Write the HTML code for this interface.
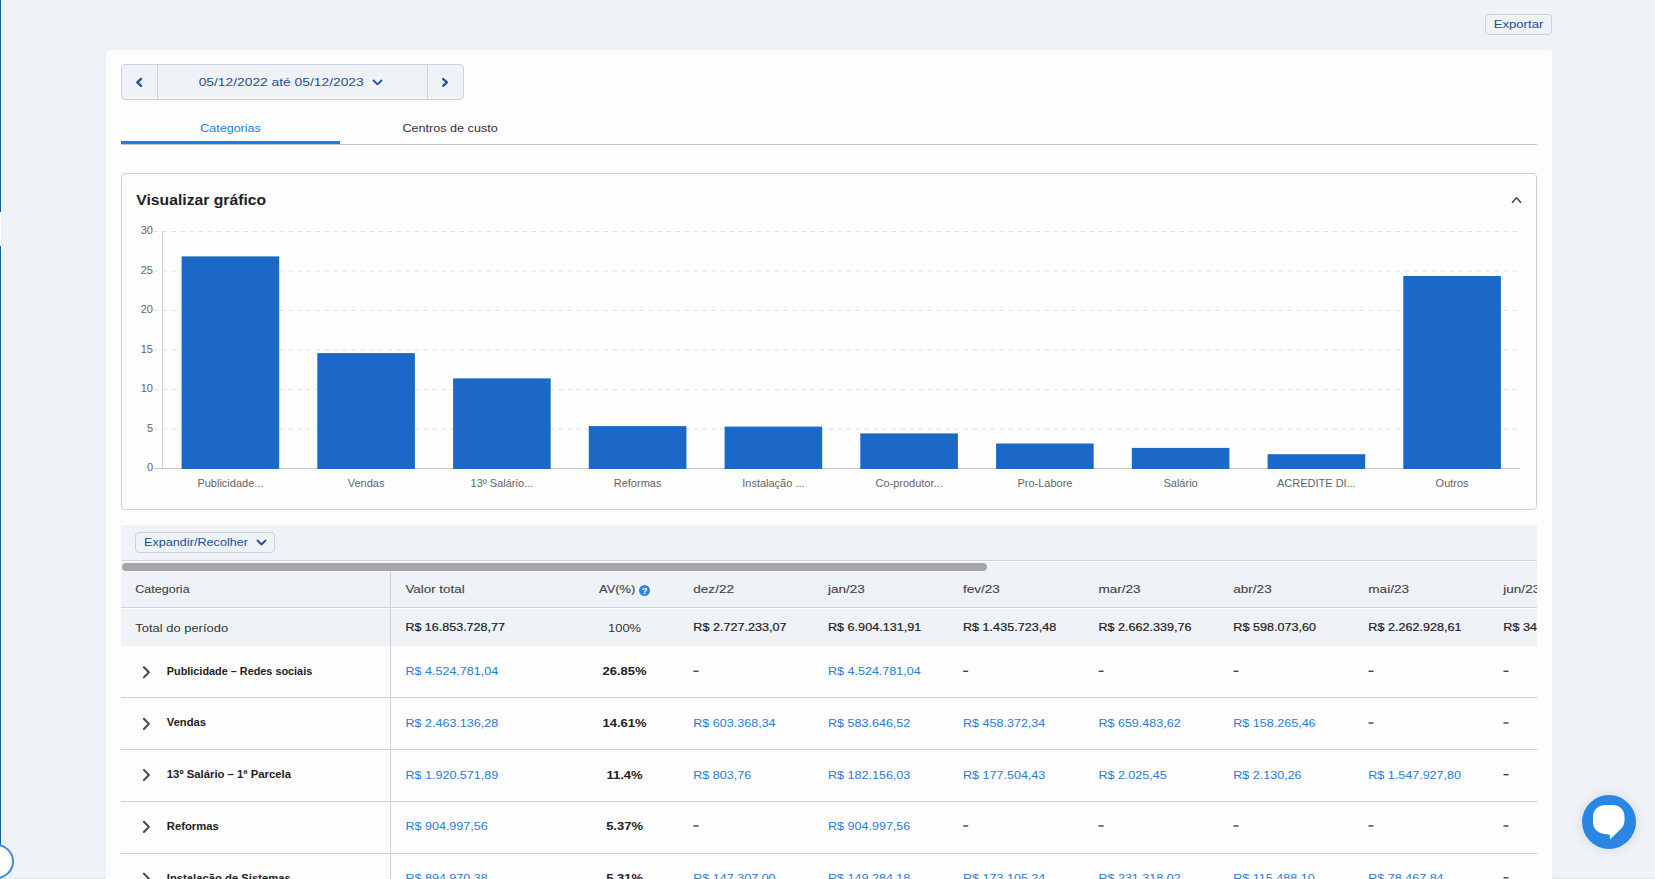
<!DOCTYPE html>
<html><head><meta charset="utf-8"><style>
*{margin:0;padding:0;box-sizing:border-box}
html,body{width:1655px;height:879px;overflow:hidden;background:#eff2f7;font-family:"Liberation Sans",sans-serif;color:#333}
.a{position:absolute}
svg text{font-family:"Liberation Sans",sans-serif}
</style></head><body>
<div class="a" style="left:0;top:0;width:1px;height:212px;background:#1160b0"></div>
<div class="a" style="left:0;top:212px;width:1px;height:34px;background:#ffffff"></div>
<div class="a" style="left:0;top:246px;width:1px;height:600px;background:#1160b0"></div>
<div class="a" style="left:0;top:878px;width:1655px;height:1px;background:#e4e4e6"></div>
<div class="a" style="left:1485px;top:14px;width:67px;height:21px;border:1px solid #c9d3de;border-radius:4px;background:#eff2f7"></div>
<div class="a" style="left:106px;top:50px;width:1446px;height:840px;background:#fdfdfd;border-radius:4px;box-shadow:0 0 2px rgba(0,0,0,.03)"></div>
<div class="a" style="left:121px;top:64px;width:343px;height:36px;border:1px solid #c9d3de;border-radius:4px;background:#eff2f7"></div>
<div class="a" style="left:157px;top:65px;width:1px;height:34px;background:#c9d3de"></div>
<div class="a" style="left:427px;top:65px;width:1px;height:34px;background:#c9d3de"></div>
<div class="a" style="left:121px;top:144px;width:1416px;height:1px;background:#c4c4c4"></div>
<div class="a" style="left:121px;top:141px;width:219px;height:3px;background:#1a7de0"></div>
<div class="a" style="left:121px;top:173px;width:1416px;height:337px;border:1px solid #c9d3de;border-radius:4px;background:#fdfdfd"></div>
<div class="a" style="left:121px;top:525px;width:1416px;height:35px;background:#eff2f7"></div>
<div class="a" style="left:121px;top:560px;width:1416px;height:1px;background:#c9d3de"></div>
<div class="a" style="left:135px;top:532px;width:140px;height:21px;border:1px solid #c9d3de;border-radius:4px;background:#eff2f7"></div>
<div class="a" style="left:121px;top:562px;width:1416px;height:45px;background:#eff2f7"></div>
<div class="a" style="left:121px;top:607px;width:1416px;height:1px;background:#c9d3de"></div>
<div class="a" style="left:122px;top:563px;width:865px;height:8px;border-radius:4px;background:#a5a5a7"></div>
<div class="a" style="left:121px;top:609px;width:1416px;height:37px;background:#eff2f7"></div>
<div class="a" style="left:121px;top:697px;width:1416px;height:1px;background:#c9d3de"></div>
<div class="a" style="left:121px;top:749px;width:1416px;height:1px;background:#c9d3de"></div>
<div class="a" style="left:121px;top:801px;width:1416px;height:1px;background:#c9d3de"></div>
<div class="a" style="left:121px;top:853px;width:1416px;height:1px;background:#c9d3de"></div>
<div class="a" style="left:390px;top:572px;width:1px;height:35px;background:#c9d3de"></div>
<div class="a" style="left:390px;top:609px;width:1px;height:270px;background:#c9d3de"></div>
<div class="a" style="left:1582px;top:795px;width:54px;height:54px;border-radius:50%;background:#2a86e3;box-shadow:0 0 10px 3px rgba(0,0,0,.07)"></div>
<div class="a" style="left:-21px;top:844px;width:35px;height:35px;border-radius:50%;border:2px solid #2f8ce8;background:#fff"></div>
<svg class="a" style="left:0;top:0" width="1655" height="879">
<line x1="153.5" y1="429.0" x2="1520" y2="429.0" stroke="#e0e0e0" stroke-dasharray="4.5 4.5"/>
<line x1="153.5" y1="389.5" x2="1520" y2="389.5" stroke="#e0e0e0" stroke-dasharray="4.5 4.5"/>
<line x1="153.5" y1="350.0" x2="1520" y2="350.0" stroke="#e0e0e0" stroke-dasharray="4.5 4.5"/>
<line x1="153.5" y1="310.5" x2="1520" y2="310.5" stroke="#e0e0e0" stroke-dasharray="4.5 4.5"/>
<line x1="153.5" y1="271.0" x2="1520" y2="271.0" stroke="#e0e0e0" stroke-dasharray="4.5 4.5"/>
<line x1="153.5" y1="231.5" x2="1520" y2="231.5" stroke="#e0e0e0" stroke-dasharray="4.5 4.5"/>
<line x1="162.5" y1="231" x2="162.5" y2="469" stroke="#d0d0d0"/>
<line x1="154" y1="468.5" x2="1520" y2="468.5" stroke="#c8c8c8"/>
<rect x="181.6" y="256.4" width="97.6" height="212.6" fill="#1c68c9"/>
<rect x="317.3" y="353.1" width="97.6" height="115.9" fill="#1c68c9"/>
<rect x="453.1" y="378.4" width="97.6" height="90.6" fill="#1c68c9"/>
<rect x="588.8" y="426.1" width="97.6" height="42.9" fill="#1c68c9"/>
<rect x="724.6" y="426.6" width="97.6" height="42.4" fill="#1c68c9"/>
<rect x="860.3" y="433.4" width="97.6" height="35.6" fill="#1c68c9"/>
<rect x="996.1" y="443.5" width="97.6" height="25.5" fill="#1c68c9"/>
<rect x="1131.8" y="447.9" width="97.6" height="21.1" fill="#1c68c9"/>
<rect x="1267.6" y="454.2" width="97.6" height="14.8" fill="#1c68c9"/>
<rect x="1403.3" y="276.0" width="97.6" height="193.0" fill="#1c68c9"/>
<text x="153" y="471.3" font-size="11" text-anchor="end" fill="#666">0</text>
<text x="153" y="431.8" font-size="11" text-anchor="end" fill="#666">5</text>
<text x="153" y="392.3" font-size="11" text-anchor="end" fill="#666">10</text>
<text x="153" y="352.8" font-size="11" text-anchor="end" fill="#666">15</text>
<text x="153" y="313.3" font-size="11" text-anchor="end" fill="#666">20</text>
<text x="153" y="273.8" font-size="11" text-anchor="end" fill="#666">25</text>
<text x="153" y="234.3" font-size="11" text-anchor="end" fill="#666">30</text>
<text x="230.4" y="487" font-size="11" text-anchor="middle" fill="#666">Publicidade...</text>
<text x="366.1" y="487" font-size="11" text-anchor="middle" fill="#666">Vendas</text>
<text x="501.9" y="487" font-size="11" text-anchor="middle" fill="#666">13º Salário...</text>
<text x="637.6" y="487" font-size="11" text-anchor="middle" fill="#666">Reformas</text>
<text x="773.4" y="487" font-size="11" text-anchor="middle" fill="#666">Instalação ...</text>
<text x="909.1" y="487" font-size="11" text-anchor="middle" fill="#666">Co-produtor...</text>
<text x="1044.9" y="487" font-size="11" text-anchor="middle" fill="#666">Pro-Labore</text>
<text x="1180.6" y="487" font-size="11" text-anchor="middle" fill="#666">Salário</text>
<text x="1316.4" y="487" font-size="11" text-anchor="middle" fill="#666">ACREDITE DI...</text>
<text x="1452.1" y="487" font-size="11" text-anchor="middle" fill="#666">Outros</text>
<text x="1518.5" y="28" font-size="11.3" text-anchor="middle" textLength="49.7" lengthAdjust="spacingAndGlyphs" fill="#1d4f9a">Exportar</text>
<text x="198.7" y="86" font-size="11.4" textLength="165.0" lengthAdjust="spacingAndGlyphs" fill="#1d4f9a">05/12/2022 até 05/12/2023</text>
<text x="230.5" y="132" font-size="11.3" text-anchor="middle" textLength="60.5" lengthAdjust="spacingAndGlyphs" fill="#2280e4">Categorias</text>
<text x="450.1" y="132" font-size="11.3" text-anchor="middle" textLength="95.4" lengthAdjust="spacingAndGlyphs" fill="#333">Centros de custo</text>
<text x="136.3" y="205" font-size="14.5" font-weight="bold" textLength="129.8" lengthAdjust="spacingAndGlyphs" fill="#222">Visualizar gráfico</text>
<text x="144" y="546" font-size="11.3" textLength="104.0" lengthAdjust="spacingAndGlyphs" fill="#1d4f9a">Expandir/Recolher</text>
<polyline points="141.1,78.9 137.3,82.4 141.1,85.9" fill="none" stroke="#1f4fa0" stroke-width="2.3" stroke-linecap="round" stroke-linejoin="round"/>
<polyline points="443.1,79 446.9,82.4 443.1,85.8" fill="none" stroke="#1f4fa0" stroke-width="2.3" stroke-linecap="round" stroke-linejoin="round"/>
<polyline points="373.5,80.5 377.5,84.3 381.5,80.5" fill="none" stroke="#1f4fa0" stroke-width="1.8" stroke-linecap="round" stroke-linejoin="round"/>
<polyline points="257.5,540.5 261.5,544.5 265.5,540.5" fill="none" stroke="#1f4fa0" stroke-width="1.8" stroke-linecap="round" stroke-linejoin="round"/>
<polyline points="1512.5,202.3 1516.5,197.8 1520.5,202.3" fill="none" stroke="#4f4a4a" stroke-width="1.6" stroke-linecap="round" stroke-linejoin="round"/>
<svg x="0" y="0" width="1537" height="879" overflow="hidden">
<text x="135.3" y="592.8" font-size="11.3" stroke="#444" stroke-width="0.12" textLength="54.3" lengthAdjust="spacingAndGlyphs" fill="#444">Categoria</text>
<text x="405.4" y="592.8" font-size="11.3" stroke="#444" stroke-width="0.12" textLength="59.3" lengthAdjust="spacingAndGlyphs" fill="#444">Valor total</text>
<text x="599.1" y="592.8" font-size="11.3" stroke="#444" stroke-width="0.12" textLength="36.2" lengthAdjust="spacingAndGlyphs" fill="#444">AV(%)</text>
<text x="693.3" y="592.8" font-size="11.3" stroke="#444" stroke-width="0.12" textLength="40.7" lengthAdjust="spacingAndGlyphs" fill="#444">dez/22</text>
<text x="828" y="592.8" font-size="11.3" stroke="#444" stroke-width="0.12" textLength="36.9" lengthAdjust="spacingAndGlyphs" fill="#444">jan/23</text>
<text x="963" y="592.8" font-size="11.3" stroke="#444" stroke-width="0.12" textLength="36.9" lengthAdjust="spacingAndGlyphs" fill="#444">fev/23</text>
<text x="1098.4" y="592.8" font-size="11.3" stroke="#444" stroke-width="0.12" textLength="42.2" lengthAdjust="spacingAndGlyphs" fill="#444">mar/23</text>
<text x="1233.3" y="592.8" font-size="11.3" stroke="#444" stroke-width="0.12" textLength="38.4" lengthAdjust="spacingAndGlyphs" fill="#444">abr/23</text>
<text x="1368.3" y="592.8" font-size="11.3" stroke="#444" stroke-width="0.12" textLength="40.7" lengthAdjust="spacingAndGlyphs" fill="#444">mai/23</text>
<text x="1503.3" y="592.8" font-size="11.3" stroke="#444" stroke-width="0.12" textLength="36.9" lengthAdjust="spacingAndGlyphs" fill="#444">jun/23</text>
<circle cx="644.5" cy="590.5" r="5.5" fill="#2a86e0"/>
<text x="644.5" y="594" font-size="9.3" font-weight="bold" fill="#fff" text-anchor="middle">?</text>
<text x="135.3" y="632" font-size="11.3" textLength="92.8" lengthAdjust="spacingAndGlyphs" fill="#333">Total do período</text>
<text x="405.4" y="631" font-size="11.3" stroke="#222" stroke-width="0.2" textLength="99.5" lengthAdjust="spacingAndGlyphs" fill="#222">R$ 16.853.728,77</text>
<text x="624.6" y="632" font-size="11.3" text-anchor="middle" textLength="33.0" lengthAdjust="spacingAndGlyphs" fill="#333">100%</text>
<text x="693.3" y="631" font-size="11.3" stroke="#222" stroke-width="0.2" textLength="93.2" lengthAdjust="spacingAndGlyphs" fill="#222">R$ 2.727.233,07</text>
<text x="828" y="631" font-size="11.3" stroke="#222" stroke-width="0.2" textLength="93.2" lengthAdjust="spacingAndGlyphs" fill="#222">R$ 6.904.131,91</text>
<text x="963" y="631" font-size="11.3" stroke="#222" stroke-width="0.2" textLength="93.2" lengthAdjust="spacingAndGlyphs" fill="#222">R$ 1.435.723,48</text>
<text x="1098.4" y="631" font-size="11.3" stroke="#222" stroke-width="0.2" textLength="93.2" lengthAdjust="spacingAndGlyphs" fill="#222">R$ 2.662.339,76</text>
<text x="1233.3" y="631" font-size="11.3" stroke="#222" stroke-width="0.2" textLength="82.7" lengthAdjust="spacingAndGlyphs" fill="#222">R$ 598.073,60</text>
<text x="1368.3" y="631" font-size="11.3" stroke="#222" stroke-width="0.2" textLength="93.2" lengthAdjust="spacingAndGlyphs" fill="#222">R$ 2.262.928,61</text>
<text x="1503.3" y="631" font-size="11.3" stroke="#222" stroke-width="0.2" textLength="100.2" lengthAdjust="spacingAndGlyphs" fill="#222">R$ 34.187.456,12</text>
<polyline points="143.9,667.2 148.9,672.3 143.9,677.4" fill="none" stroke="#4a4545" stroke-width="2" stroke-linecap="round" stroke-linejoin="round"/>
<text x="166.8" y="674.8" font-size="11" font-weight="bold" textLength="145.4" lengthAdjust="spacingAndGlyphs" fill="#222">Publicidade – Redes sociais</text>
<text x="405.4" y="675.2" font-size="11.3" textLength="92.9" lengthAdjust="spacingAndGlyphs" fill="#2a7bdb">R$ 4.524.781,04</text>
<text x="624.6" y="675.2" font-size="11.3" font-weight="bold" text-anchor="middle" textLength="44.2" lengthAdjust="spacingAndGlyphs" fill="#222">26.85%</text>
<rect x="693.5" y="670.6" width="5" height="1.3" fill="#333"/>
<text x="828" y="675.2" font-size="11.3" textLength="92.7" lengthAdjust="spacingAndGlyphs" fill="#2a7bdb">R$ 4.524.781,04</text>
<rect x="963.2" y="670.6" width="5" height="1.3" fill="#333"/>
<rect x="1098.6" y="670.6" width="5" height="1.3" fill="#333"/>
<rect x="1233.5" y="670.6" width="5" height="1.3" fill="#333"/>
<rect x="1368.5" y="670.6" width="5" height="1.3" fill="#333"/>
<rect x="1503.5" y="670.6" width="5" height="1.3" fill="#333"/>
<polyline points="143.9,718.8 148.9,723.9 143.9,729.0" fill="none" stroke="#4a4545" stroke-width="2" stroke-linecap="round" stroke-linejoin="round"/>
<text x="166.8" y="725.9" font-size="11" font-weight="bold" textLength="39.2" lengthAdjust="spacingAndGlyphs" fill="#222">Vendas</text>
<text x="405.4" y="727.0" font-size="11.3" textLength="92.9" lengthAdjust="spacingAndGlyphs" fill="#2a7bdb">R$ 2.463.136,28</text>
<text x="624.6" y="727.0" font-size="11.3" font-weight="bold" text-anchor="middle" textLength="44.2" lengthAdjust="spacingAndGlyphs" fill="#222">14.61%</text>
<text x="693.3" y="727.0" font-size="11.3" textLength="82.3" lengthAdjust="spacingAndGlyphs" fill="#2a7bdb">R$ 603.368,34</text>
<text x="828" y="727.0" font-size="11.3" textLength="82.3" lengthAdjust="spacingAndGlyphs" fill="#2a7bdb">R$ 583.646,52</text>
<text x="963" y="727.0" font-size="11.3" textLength="82.3" lengthAdjust="spacingAndGlyphs" fill="#2a7bdb">R$ 458.372,34</text>
<text x="1098.4" y="727.0" font-size="11.3" textLength="82.3" lengthAdjust="spacingAndGlyphs" fill="#2a7bdb">R$ 659.483,62</text>
<text x="1233.3" y="727.0" font-size="11.3" textLength="82.3" lengthAdjust="spacingAndGlyphs" fill="#2a7bdb">R$ 158.265,46</text>
<rect x="1368.5" y="722.4" width="5" height="1.3" fill="#333"/>
<rect x="1503.5" y="722.4" width="5" height="1.3" fill="#333"/>
<polyline points="143.9,769.9 148.9,775.0 143.9,780.1" fill="none" stroke="#4a4545" stroke-width="2" stroke-linecap="round" stroke-linejoin="round"/>
<text x="166.8" y="777.8" font-size="11" font-weight="bold" textLength="124.2" lengthAdjust="spacingAndGlyphs" fill="#222">13º Salário – 1ª Parcela</text>
<text x="405.4" y="778.6" font-size="11.3" textLength="92.9" lengthAdjust="spacingAndGlyphs" fill="#2a7bdb">R$ 1.920.571,89</text>
<text x="624.6" y="778.6" font-size="11.3" font-weight="bold" text-anchor="middle" textLength="36.2" lengthAdjust="spacingAndGlyphs" fill="#222">11.4%</text>
<text x="693.3" y="778.6" font-size="11.3" textLength="57.9" lengthAdjust="spacingAndGlyphs" fill="#2a7bdb">R$ 803,76</text>
<text x="828" y="778.6" font-size="11.3" textLength="82.3" lengthAdjust="spacingAndGlyphs" fill="#2a7bdb">R$ 182.156,03</text>
<text x="963" y="778.6" font-size="11.3" textLength="82.3" lengthAdjust="spacingAndGlyphs" fill="#2a7bdb">R$ 177.504,43</text>
<text x="1098.4" y="778.6" font-size="11.3" textLength="68.3" lengthAdjust="spacingAndGlyphs" fill="#2a7bdb">R$ 2.025,45</text>
<text x="1233.3" y="778.6" font-size="11.3" textLength="68.3" lengthAdjust="spacingAndGlyphs" fill="#2a7bdb">R$ 2.130,26</text>
<text x="1368.3" y="778.6" font-size="11.3" textLength="92.7" lengthAdjust="spacingAndGlyphs" fill="#2a7bdb">R$ 1.547.927,80</text>
<rect x="1503.5" y="774.0" width="5" height="1.3" fill="#333"/>
<polyline points="143.9,821.8 148.9,826.9 143.9,832.0" fill="none" stroke="#4a4545" stroke-width="2" stroke-linecap="round" stroke-linejoin="round"/>
<text x="166.8" y="829.7" font-size="11" font-weight="bold" textLength="52.0" lengthAdjust="spacingAndGlyphs" fill="#222">Reformas</text>
<text x="405.4" y="829.9" font-size="11.3" textLength="82.4" lengthAdjust="spacingAndGlyphs" fill="#2a7bdb">R$ 904.997,56</text>
<text x="624.6" y="829.9" font-size="11.3" font-weight="bold" text-anchor="middle" textLength="36.9" lengthAdjust="spacingAndGlyphs" fill="#222">5.37%</text>
<rect x="693.5" y="825.3" width="5" height="1.3" fill="#333"/>
<text x="828" y="829.9" font-size="11.3" textLength="82.3" lengthAdjust="spacingAndGlyphs" fill="#2a7bdb">R$ 904.997,56</text>
<rect x="963.2" y="825.3" width="5" height="1.3" fill="#333"/>
<rect x="1098.6" y="825.3" width="5" height="1.3" fill="#333"/>
<rect x="1233.5" y="825.3" width="5" height="1.3" fill="#333"/>
<rect x="1368.5" y="825.3" width="5" height="1.3" fill="#333"/>
<rect x="1503.5" y="825.3" width="5" height="1.3" fill="#333"/>
<polyline points="143.9,873.6 148.9,878.7 143.9,883.8" fill="none" stroke="#4a4545" stroke-width="2" stroke-linecap="round" stroke-linejoin="round"/>
<text x="166.8" y="881.7" font-size="11" font-weight="bold" textLength="124.0" lengthAdjust="spacingAndGlyphs" fill="#222">Instalação de Sistemas</text>
<text x="405.4" y="881.8" font-size="11.3" textLength="82.4" lengthAdjust="spacingAndGlyphs" fill="#2a7bdb">R$ 894.970,38</text>
<text x="624.6" y="881.8" font-size="11.3" font-weight="bold" text-anchor="middle" textLength="36.9" lengthAdjust="spacingAndGlyphs" fill="#222">5.31%</text>
<text x="693.3" y="881.8" font-size="11.3" textLength="82.3" lengthAdjust="spacingAndGlyphs" fill="#2a7bdb">R$ 147.307,00</text>
<text x="828" y="881.8" font-size="11.3" textLength="82.3" lengthAdjust="spacingAndGlyphs" fill="#2a7bdb">R$ 149.284,18</text>
<text x="963" y="881.8" font-size="11.3" textLength="82.3" lengthAdjust="spacingAndGlyphs" fill="#2a7bdb">R$ 173.105,24</text>
<text x="1098.4" y="881.8" font-size="11.3" textLength="82.3" lengthAdjust="spacingAndGlyphs" fill="#2a7bdb">R$ 231.318,02</text>
<text x="1233.3" y="881.8" font-size="11.3" textLength="81.3" lengthAdjust="spacingAndGlyphs" fill="#2a7bdb">R$ 115.488,10</text>
<text x="1368.3" y="881.8" font-size="11.3" textLength="75.3" lengthAdjust="spacingAndGlyphs" fill="#2a7bdb">R$ 78.467,84</text>
<rect x="1503.5" y="877.2" width="5" height="1.3" fill="#333"/>
</svg>
</svg>
<svg class="a" style="left:1582px;top:795px" width="54" height="54"><path d="M24 10 L30 10 C37.5 10 42.5 14.5 42.5 21.5 L42.5 25.5 C42.5 29.5 40.8 32.5 38 34.8 L28 44.6 L27.6 39.4 L24 39.2 C16 38.8 11 34 11 27 L11 21.5 C11 14.5 16.5 10 24 10 Z" fill="#fff"/></svg>
</body></html>
